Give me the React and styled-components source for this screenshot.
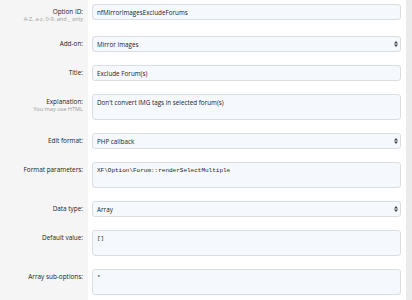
import React from 'react'
import styled, { createGlobalStyle } from 'styled-components'

const GlobalStyle = createGlobalStyle`
  html, body {
    margin: 0;
    padding: 0;
    overflow: hidden;
    background: #ffffff;
  }
  body {
    font-family: "Open Sans", "Noto Sans", sans-serif;
    color: #1d1d1d;
  }
`

const Page = styled.div`
  display: flex;
  width: 412px;
  height: 300px;
  overflow: hidden;
`

const Form = styled.div`
  flex: 1;
  display: flex;
  flex-direction: column;
  background: linear-gradient(to right, #f5f5f5 88px, #ffffff 88px);
`

const Gutter = styled.div`
  width: 6px;
  background: #ebebeb;
`

const Row = styled.div`
  display: grid;
  grid-template-columns: 88px 1fr;
  padding-top: ${props => props.top || 6}px;
  padding-bottom: ${props => props.bottom || 7}px;
`

const Label = styled.div`
  text-align: right;
  padding: 3px 5px 0 0;
  font-size: 6.4px;
  line-height: 9px;
  color: #222;
`

const Hint = styled.div`
  font-size: 5.6px;
  line-height: 7px;
  color: #9a9a9a;
`

const Control = styled.div`
  padding: 0 5px 0 4px;
`

const Field = styled.div`
  position: relative;
  box-sizing: border-box;
  height: ${props => props.tall ? 26 : 16}px;
  padding: 3px 4px 0 4px;
  background: #f5f9fd;
  border: 1px solid #dadee3;
  border-radius: 3px;
  font-size: ${props => props.mono ? 6 : 6.3}px;
  line-height: 9px;
  color: #222;
  font-family: ${props => props.mono ? '"Liberation Mono", monospace' : 'inherit'};
  white-space: pre;
`

const Arrows = styled.svg`
  position: absolute;
  right: 2px;
  top: 50%;
  margin-top: -3px;
`

const Separator = styled.div`
  height: 1px;
  margin-left: 88px;
  background: #e6e6e6;
`

const SelectArrows = () => (
  <Arrows width="4" height="6" viewBox="0 0 4 6">
    <polygon points="0,2.5 2,0 4,2.5" fill="#444" />
    <polygon points="0,3.5 2,6 4,3.5" fill="#444" />
  </Arrows>
)

export default function App() {
  return (
    <Page>
      <GlobalStyle />
      <Form>
        <Row top={4}>
          <Label>
            Option ID:
            <Hint>A-Z, a-z, 0-9, and _ only</Hint>
          </Label>
          <Control>
            <Field>nfMirrorImagesExcludeForums</Field>
          </Control>
        </Row>
        <Row>
          <Label>Add-on:</Label>
          <Control>
            <Field>Mirror Images<SelectArrows /></Field>
          </Control>
        </Row>
        <Separator />
        <Row>
          <Label>Title:</Label>
          <Control>
            <Field>Exclude Forum(s)</Field>
          </Control>
        </Row>
        <Row>
          <Label>
            Explanation:
            <Hint>You may use HTML</Hint>
          </Label>
          <Control>
            <Field tall>Don't convert IMG tags in selected forum(s)</Field>
          </Control>
        </Row>
        <Separator />
        <Row>
          <Label>Edit format:</Label>
          <Control>
            <Field>PHP callback<SelectArrows /></Field>
          </Control>
        </Row>
        <Row>
          <Label>Format parameters:</Label>
          <Control>
            <Field tall mono>XF\Option\Forum::renderSelectMultiple</Field>
          </Control>
        </Row>
        <Separator />
        <Row>
          <Label>Data type:</Label>
          <Control>
            <Field>Array<SelectArrows /></Field>
          </Control>
        </Row>
        <Row>
          <Label>Default value:</Label>
          <Control>
            <Field tall mono>[]</Field>
          </Control>
        </Row>
        <Row>
          <Label>Array sub-options:</Label>
          <Control>
            <Field tall mono>*</Field>
          </Control>
        </Row>
      </Form>
      <Gutter />
    </Page>
  )
}
